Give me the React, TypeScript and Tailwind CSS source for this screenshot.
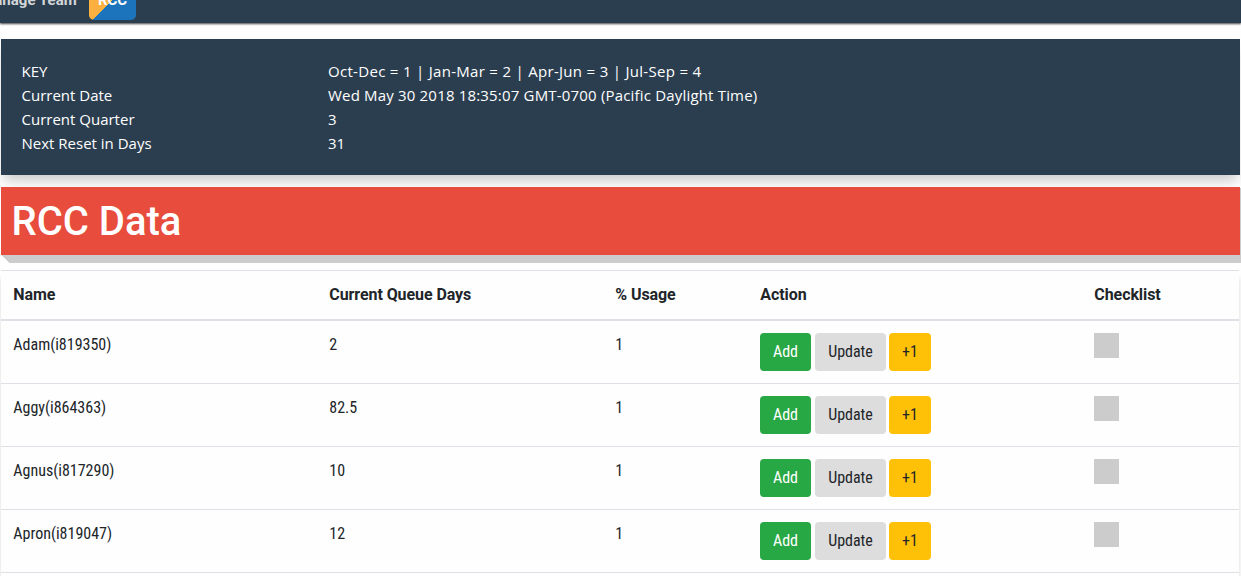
const info = [
  { label: 'KEY', value: 'Oct-Dec = 1 | Jan-Mar = 2 | Apr-Jun = 3 | Jul-Sep = 4', spacing: 'tracking-[0.3px]' },
  {
    label: 'Current Date',
    value: 'Wed May 30 2018 18:35:07 GMT-0700 (Pacific Daylight Time)',
    spacing: 'tracking-[0.18px]',
  },
  { label: 'Current Quarter', value: '3', spacing: '' },
  { label: 'Next Reset in Days', value: '31', spacing: '' },
];

const people = [
  { name: 'Adam(i819350)', days: '2', usage: '1' },
  { name: 'Aggy(i864363)', days: '82.5', usage: '1' },
  { name: 'Agnus(i817290)', days: '10', usage: '1' },
  { name: 'Apron(i819047)', days: '12', usage: '1' },
];

const columns = 'grid grid-cols-[316px_286px_145px_334px_1fr] pl-[12.3px]';

function NavBar() {
  return (
    <nav className="relative z-10 h-[23px] bg-[#2b3e4f] shadow-[0_1px_2px_rgba(0,0,0,0.75)]">
      <div className="flex h-[23px] w-full items-end overflow-hidden font-['Roboto',sans-serif] text-[15px] font-bold leading-6">
        <span className="-ml-[19px] mb-[11px] w-[108px] whitespace-nowrap tracking-[0.05px] text-[#d3d6d8]">
          Manage Team
        </span>
        <span className="mb-[3px] flex h-10 w-[47px] shrink-0 items-center justify-center rounded-[5px] bg-[linear-gradient(135deg,#fbb040_50%,#1c75bc_50%)] text-white">
          RCC
        </span>
      </div>
    </nav>
  );
}

function Summary() {
  return (
    <section className="mx-px mt-4 flex h-[136px] w-[1239px] flex-col bg-[#2b3e4f] py-5 pl-[20.5px] font-['Open_Sans',sans-serif] text-[15px] leading-6 text-white shadow-[0_9px_12px_-3px_rgba(0,0,0,0.2)]">
      {info.map(({ label, value, spacing }) => (
        <div key={label} className="flex whitespace-nowrap">
          <span className="w-[306.5px] shrink-0">{label}</span>
          <span className={spacing}>{value}</span>
        </div>
      ))}
    </section>
  );
}

function Row({ name, days, usage }: { name: string; days: string; usage: string }) {
  return (
    <div className={`${columns} h-[63px] border-b border-[#dee2e6] pt-3 font-normal`}>
      <span>{name}</span>
      <span>{days}</span>
      <span>{usage}</span>
      <div className="-ml-[0.3px] flex h-[38px]">
        <button className="mr-1 w-[51px] rounded-[4px] bg-[#28a745] text-white">Add</button>
        <button className="mr-[3px] w-[71px] rounded-[4px] bg-[#ddd]">Update</button>
        <button className="w-[42px] rounded-[4px] bg-[#ffc107]">+1</button>
      </div>
      <span className="-ml-[0.3px] size-[25px] bg-[#ccc]" />
    </div>
  );
}

export default function App() {
  return (
    <div className="h-[576px] w-[1241px] overflow-hidden bg-[#fefefe] text-[#212529]">
      <NavBar />
      <Summary />
      <h1 className="relative ml-px mt-3 h-[68px] w-[1239px] bg-[#e74c3c] px-[10.5px] pt-[11px] font-['Roboto',sans-serif] text-[40px] font-medium leading-[48px] text-white shadow-[1px_1px_#ccc,2px_2px_#ccc,3px_3px_#ccc,4px_4px_#ccc,5px_5px_#ccc,6px_6px_#ccc,7px_7px_#ccc,8px_8px_#ccc]">
        RCC Data
      </h1>
      <div className="ml-px mt-[15px] w-[1238px] font-['Roboto_Condensed','Roboto',sans-serif] text-base leading-6 [font-stretch:75%] shadow-[0_8px_5px_rgba(0,0,0,0.15)]">
        <div
          className={`${columns} h-[51px] border-b-2 border-t border-[#dee2e6] pt-3 font-['Roboto',sans-serif] font-bold tracking-[-0.08px] [font-stretch:100%]`}
        >
          <span>Name</span>
          <span>Current Queue Days</span>
          <span>% Usage</span>
          <span>Action</span>
          <span>Checklist</span>
        </div>
        {people.map((person) => (
          <Row key={person.name} {...person} />
        ))}
        <div className="h-16" />
      </div>
    </div>
  );
}
